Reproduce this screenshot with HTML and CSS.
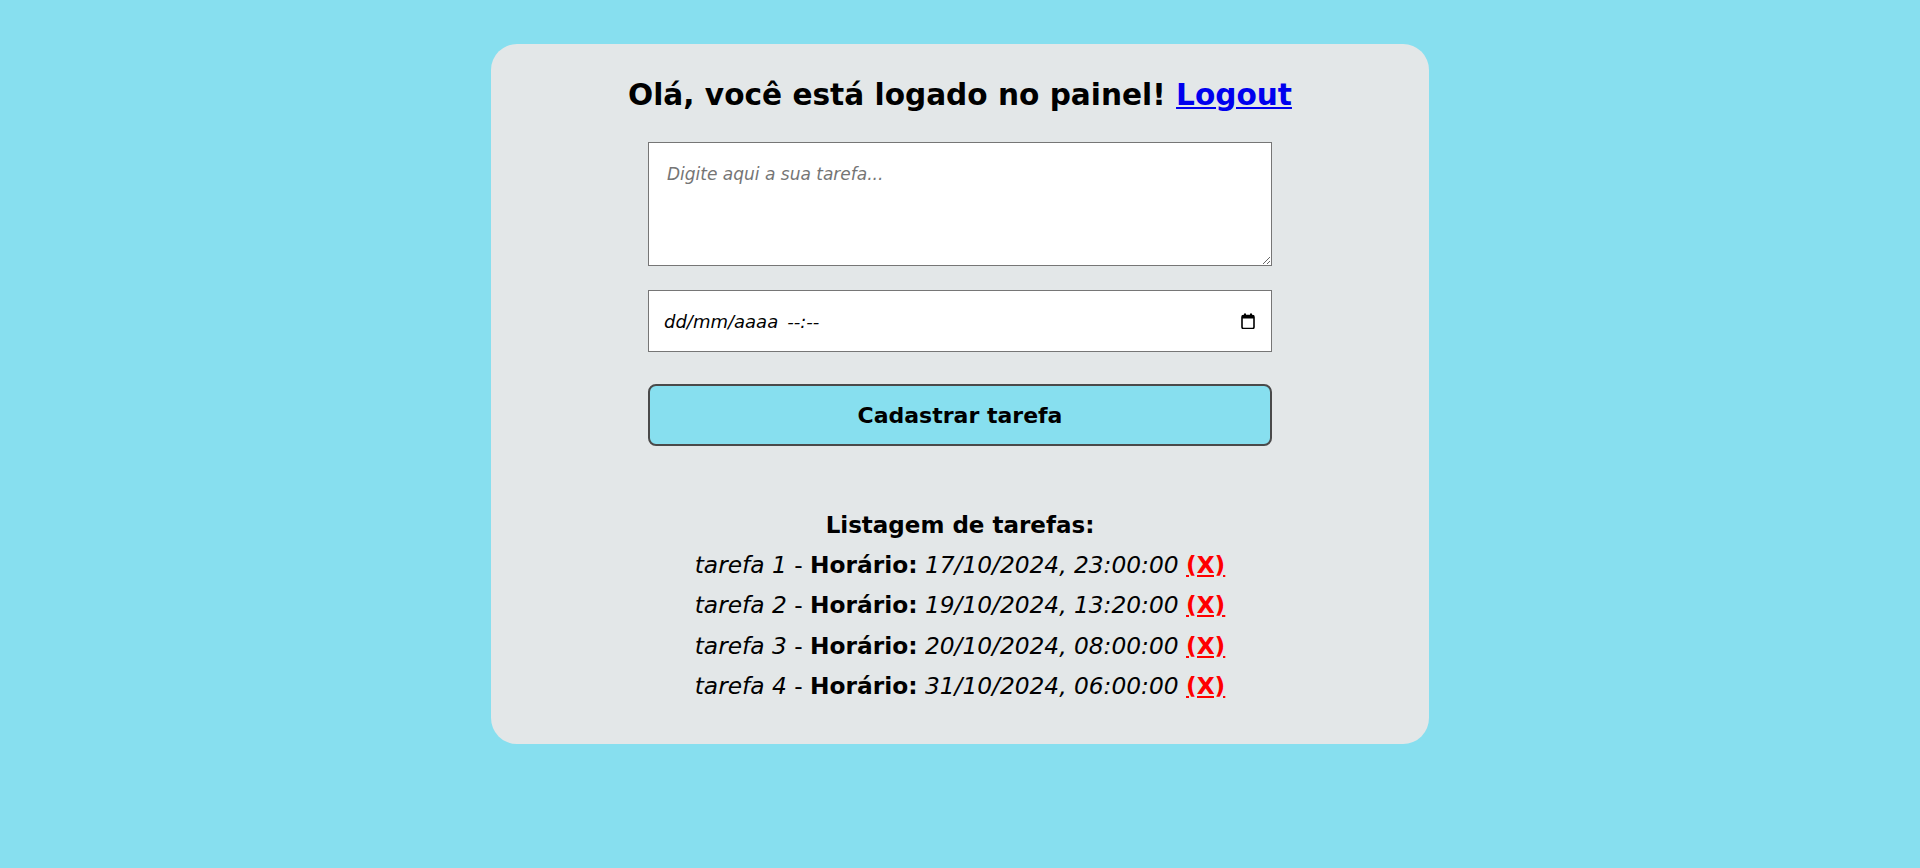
FILE: index.html
```html
<!DOCTYPE html>
<html lang="pt-BR">
<head>
<meta charset="utf-8">
<title>Painel</title>
<link rel="stylesheet" href="styles.css">
</head>
<body>
<main class="card">
  <h1 class="title">Olá, você está logado no painel! <a href="#" class="logout">Logout</a></h1>
  <form class="task-form">
    <textarea class="task-text" placeholder="Digite aqui a sua tarefa..."></textarea>
    <div class="date-field">
      <span class="date-text"><span>dd/mm/aaaa</span><span class="time-part">--:--</span></span>
      <svg class="cal-icon" width="14" height="16" viewBox="0 0 14 16" aria-hidden="true">
        <rect x="3" y="0.5" width="2" height="3" fill="#000"/>
        <rect x="9" y="0.5" width="2" height="3" fill="#000"/>
        <rect x="1" y="2.5" width="12" height="13" rx="1.5" fill="none" stroke="#000" stroke-width="1.6"/>
        <rect x="1" y="2.5" width="12" height="3" fill="#000"/>
      </svg>
    </div>
    <button type="button" class="submit">Cadastrar tarefa</button>
  </form>
  <section class="tasks">
    <h2 class="tasks-title">Listagem de tarefas:</h2>
    <p class="task"><em>tarefa 1</em> - <strong>Horário:</strong> <em>17/10/2024, 23:00:00</em> <a href="#" class="del">(X)</a></p>
    <p class="task"><em>tarefa 2</em> - <strong>Horário:</strong> <em>19/10/2024, 13:20:00</em> <a href="#" class="del">(X)</a></p>
    <p class="task"><em>tarefa 3</em> - <strong>Horário:</strong> <em>20/10/2024, 08:00:00</em> <a href="#" class="del">(X)</a></p>
    <p class="task"><em>tarefa 4</em> - <strong>Horário:</strong> <em>31/10/2024, 06:00:00</em> <a href="#" class="del">(X)</a></p>
  </section>
</main>
</body>
</html>
```
FILE: styles.css
```css
html, body {
  margin: 0;
  padding: 0;
}
body {
  background: #87dfef;
  font-family: "DejaVu Sans", Verdana, sans-serif;
  color: #000;
  min-height: 868px;
}
.card {
  width: 938px;
  box-sizing: border-box;
  margin: 44px auto 0;
  background: #e3e7e8;
  border-radius: 26px;
  padding: 33px 0 38px;
  display: flex;
  flex-direction: column;
  align-items: center;
}
.title {
  margin: 0;
  font-size: 29.6px;
  line-height: 36px;
  font-weight: bold;
  text-align: center;
}
.logout {
  color: #0000ee;
  text-decoration: underline;
}
.task-form {
  width: 624px;
  margin-top: 29px;
  display: flex;
  flex-direction: column;
}
.task-text {
  box-sizing: border-box;
  width: 624px;
  height: 124px;
  margin: 0;
  border: 1px solid #767676;
  border-radius: 0;
  padding: 21px 18px 18px;
  font-family: "DejaVu Sans", Verdana, sans-serif;
  font-size: 17px;
  font-style: italic;
  line-height: 20px;
  background: #fff;
  color: #000;
}
.task-text::placeholder {
  color: #757575;
  font-style: italic;
}
.date-field {
  box-sizing: border-box;
  margin-top: 24px;
  height: 62px;
  border: 1px solid #767676;
  background: #fff;
  display: flex;
  align-items: center;
  justify-content: space-between;
  padding: 2px 16px 0 15px;
}
.date-text {
  font-size: 18px;
  font-style: italic;
  line-height: 20px;
  white-space: nowrap;
}
.time-part {
  margin-left: 9px;
}
.cal-icon {
  display: block;
  margin-top: -2px;
}
.submit {
  margin-top: 32px;
  height: 62px;
  box-sizing: border-box;
  border: 2px solid #4a4a4a;
  border-radius: 8px;
  background: #87dfef;
  font-family: "DejaVu Sans", Verdana, sans-serif;
  font-size: 22px;
  font-weight: bold;
  color: #000;
  padding: 0;
}
.tasks {
  margin-top: 59px;
  text-align: center;
}
.tasks-title {
  margin: 0;
  font-size: 23px;
  line-height: 40px;
  font-weight: bold;
}
.task {
  margin: 0;
  font-size: 23.3px;
  line-height: 40.3px;
}
.del {
  color: #ff0000;
  font-weight: bold;
  text-decoration: underline;
}
```
